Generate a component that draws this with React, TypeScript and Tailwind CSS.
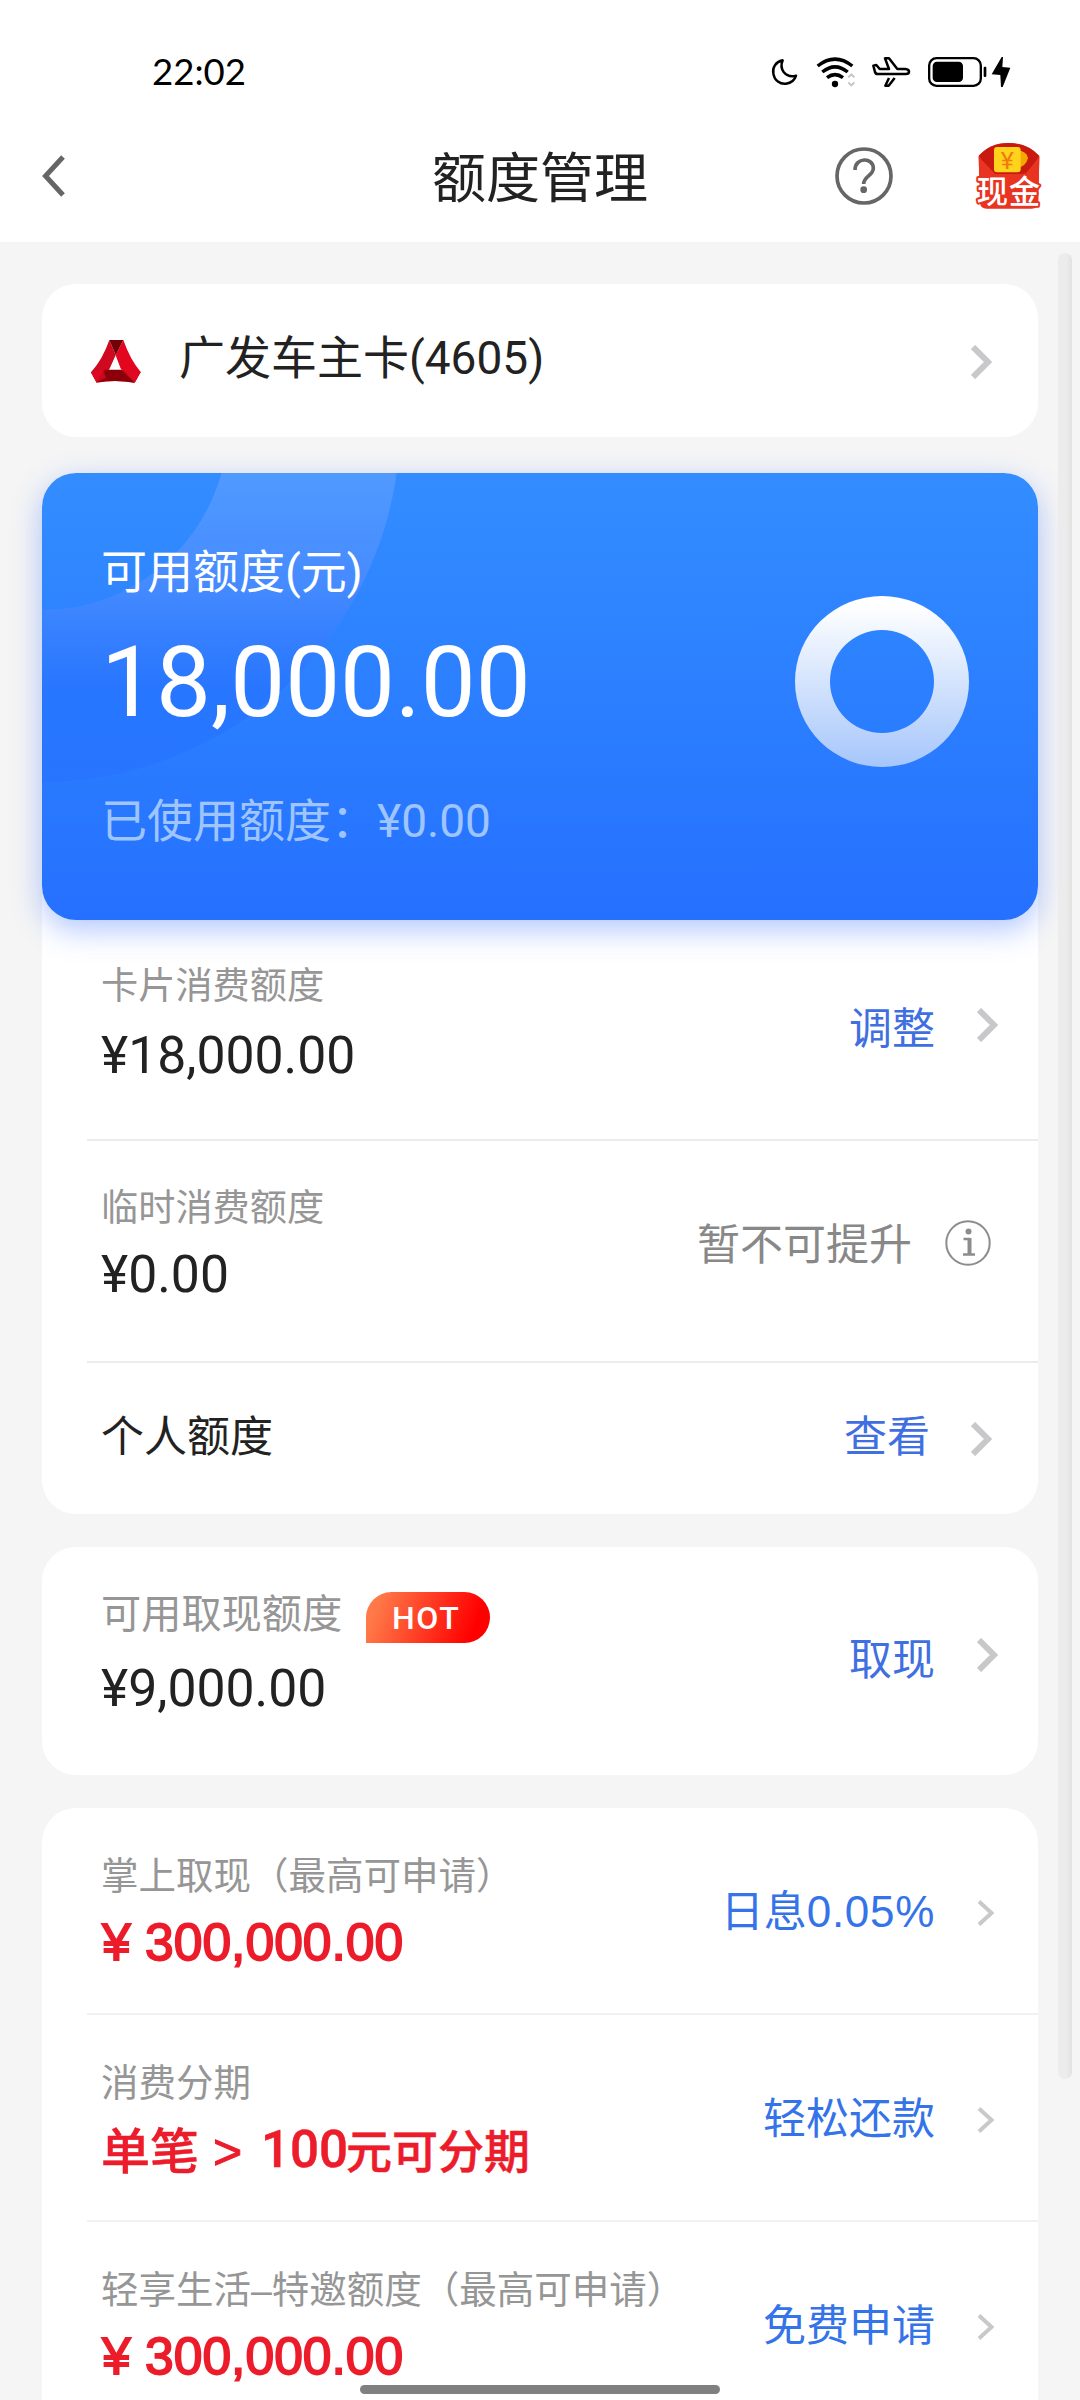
import type { ReactNode } from "react";

const SANS = "font-['Roboto','Noto_Sans_CJK_SC',sans-serif]";
const GROTESK = "font-['Liberation_Sans','Noto_Sans_CJK_SC',sans-serif]";

function StatusIcons() {
  return (
    <div className="ml-[526px] flex">
      <svg className="h-11 w-[27px]" viewBox="33 0 81 132" fill="none" stroke="#000" strokeWidth="7.500" strokeLinejoin="round">
        <path d="M68 31C46 36 37 53 40 70c3 22 21 33 38 31 16-2 26-10 30-24-14 4-28 0-37-11-9-12-8-23-3-35z" />
      </svg>
      <svg className="ml-[18px] h-11 w-[41px]" viewBox="168 0 123 132" fill="none">
        <g stroke="#000" strokeWidth="10.500">
          <path d="M173 48Q225 7 277 48" />
          <path d="M187 66Q225 35 263 66" />
          <path d="M201 83Q225 65 249 83" />
        </g>
        <circle cx="225" cy="102" r="9.5" fill="#000" />
        <path d="M265 82l9-9 9 9M265 97l9 9 9-9" stroke="#c4c4c4" strokeWidth="6" />
      </svg>
      <svg className="ml-3.5 h-11 w-10" viewBox="333 0 120 132" fill="none" stroke="#000" strokeWidth="7.500" strokeLinejoin="round">
        <path d="M340 47l9-2 10 12h28L375 25h12l25 32h24q11 1 11 8 0 7-10 7H353q-6 0-8-6z" />
        <path d="M387 84l-11 23h10l18-23" />
      </svg>
      <svg className="ml-4 h-11 w-[60px]" viewBox="501 0 180 132">
        <rect x="507.5" y="24.500" width="155" height="83" rx="22" fill="none" stroke="#000" strokeWidth="7" />
        <rect x="518" y="35" width="91" height="61" rx="13" />
        <rect x="671" y="50" width="8" height="31" rx="3" />
      </svg>
      <svg className="ml-1 h-11 w-5" viewBox="693 0 60 132">
        <path d="M725 21l-30 52 26 2 2 36h5l23-58-24-2 2-30z" />
      </svg>
    </div>
  );
}

function HelpIcon() {
  return (
    <svg className="-mt-[3px] ml-[187px] size-[58px]" viewBox="225 291 174 174" fill="none" stroke="#666" strokeWidth="11">
      <circle cx="312" cy="378" r="81" />
      <path d="M285 360C285 321 340 321 340 355c0 22-29 24-29 47" />
      <circle cx="311" cy="419" r="10" fill="#666" stroke="none" />
    </svg>
  );
}

function CashIcon() {
  return (
    <svg className="-mt-[3px] ml-[83px] h-[67px] w-[65px] overflow-visible" viewBox="648 276 195 201">
      <path d="M656 318Q690 279 746 279T838 318L835 460Q833 476 815 476H680Q662 476 660 460z" fill="#e83420" />
      <path d="M656 318Q690 279 746 279T838 318L802 372H694z" fill="#c91a10" />
      <path d="M656 320l50 52h90l42-52-2 80H658z" fill="#e83420" />
      <path d="M770 300q32 5 34 24-5 24-34 32z" fill="#f5a800" />
      <rect x="702" y="291" width="80" height="76" rx="9" fill="#ffd21c" />
      <text x="742" y="356" textAnchor="middle" fontSize="74" fill="#ee7a10" className="font-['Roboto',sans-serif]">¥</text>
      <text x="650" y="460" textLength="190" fontSize="94" fill="#fff" stroke="#e83420" strokeWidth="12" strokeLinejoin="round" paintOrder="stroke" className="font-['Noto_Sans_CJK_SC',sans-serif] font-medium">现金</text>
    </svg>
  );
}

function BankLogo() {
  return (
    <svg className="ml-[38px] h-[70px] w-20" viewBox="0 0 240 210">
      <path d="M88 42L107 88 88 130 50 170 33 139Q68 100 88 42z" fill="#cf0a20" />
      <path d="M130 42L107 88 122 128 164 170 182 138Q150 100 130 42z" fill="#e4061f" />
      <path d="M88 42h42L107 88z" fill="#720007" />
      <path d="M33 139l36-6 55-1 58 6-18 32q-57-10-114 0z" fill="#c8081c" />
      <path d="M69 131h55l40 39q-57-9-114-1l28-14z" fill="#8c0009" />
      <path d="M33 139l40-9-23 39zM182 138l-52-8 34 39z" fill="#dd0a22" />
      <path d="M106 92l16 37q-15-4-31 0z" fill="#fff" />
    </svg>
  );
}

function Chevron({ small = false, className = "" }: { small?: boolean; className?: string }) {
  return small ? (
    <svg className={`h-[26px] w-[18px] ${className}`} viewBox="0 0 18 26" fill="none" stroke="#c9c9c9" strokeWidth="4">
      <path d="M2 1.5L14.5 13 2 24.5" />
    </svg>
  ) : (
    <svg className={`h-[34px] w-[21px] ${className}`} viewBox="0 0 21 34" fill="none" stroke="#c8c8ca" strokeWidth="6">
      <path d="M2 2L17 17 2 32" />
    </svg>
  );
}

function InfoIcon({ className = "" }: { className?: string }) {
  return (
    <svg className={`h-[46px] w-[46px] ${className}`} viewBox="0 0 46 46" fill="none" stroke="#8c8c8c">
      <circle cx="23" cy="23" r="21.7" strokeWidth="2" />
      <circle cx="23.5" cy="11.5" r="3" fill="#8c8c8c" stroke="none" />
      <path d="M24.500 18v16" strokeWidth="4" />
      <path d="M18.500 19H25M18 34.500h12" strokeWidth="2.4" />
    </svg>
  );
}

function Divider({ faint = false }: { faint?: boolean }) {
  return faint ? <div className="ml-[45px] h-[2px] bg-[#f1f1f1]" /> : <div className="ml-[45px] h-[2px] bg-[#ececec]" />;
}

function Offer({ label, value, action }: { label: string; value: ReactNode; action: ReactNode }) {
  return (
    <div className={`flex h-[205px] items-start justify-between pl-[59px] pr-[43px] ${GROTESK}`}>
      <div className="whitespace-nowrap pt-12">
        <div className="text-[37.5px] leading-[40px] text-[#969696]">{label}</div>
        <div className="mt-5 text-[52px] leading-[52px] text-[#ec1c2b]">{value}</div>
      </div>
      <div className="flex pt-[82px]">
        <div className="text-[43px] leading-[44px] text-[#3473e8]">{action}</div>
        <Chevron small className="ml-[42px] mt-[10px]" />
      </div>
    </div>
  );
}

function RedAmount({ children }: { children: string }) {
  return <span className="ml-px text-[51.600px] [-webkit-text-stroke:1.800px_#ec1c2b]">{children}</span>;
}

export default function App() {
  return (
    <div className={`relative h-[2400px] w-[1080px] overflow-hidden bg-[#f5f5f5] text-[#222] ${SANS}`}>
      <header className="h-[242px] bg-white pt-[50px]">
        <div className="flex h-11 pl-[152px]">
          <div className="-mt-px w-[93px] whitespace-nowrap font-['Lato',sans-serif] text-[36.600px] leading-[44px] text-black">22:02</div>
          <StatusIcons />
        </div>
        <div className="flex h-[148px] items-center pl-[42px] pt-[18px]">
          <svg className="-mt-[2px] h-[42px] w-[23px]" viewBox="0 0 23 42" fill="none" stroke="#666" strokeWidth="5">
            <path d="M21 2L3.5 21 21 40" />
          </svg>
          <h1 className="ml-[367px] mt-[6px] w-[216px] whitespace-nowrap text-[54px] leading-[60px]">额度管理</h1>
          <HelpIcon />
          <CashIcon />
        </div>
      </header>

      <main className="px-[42px] pt-[42px]">
        <section className="flex h-[153px] items-center rounded-[34px] bg-white">
          <BankLogo />
          <div className="-mt-[5px] ml-[19px] flex-1 whitespace-nowrap text-[46px] leading-[52px]">广发车主卡(4605)</div>
          <Chevron className="mr-[46px] mt-[3px]" />
        </section>

        <div className="mt-9 rounded-[34px] bg-white">
          <section className="relative flex h-[447px] justify-between rounded-[34px] bg-linear-to-b from-[#338dff] to-[#2670ff] shadow-[0_10px_30px_rgba(38,100,255,0.36)]">
            <svg className="absolute left-0 top-0 h-[447px] w-[996px] rounded-[34px]" viewBox="0 0 996 447">
              <defs>
                <linearGradient id="arc" gradientUnits="userSpaceOnUse" x1="0" y1="0" x2="0" y2="310">
                  <stop offset="0" stopColor="#559cff" stopOpacity="0.85" />
                  <stop offset="0.35" stopColor="#4a8cff" stopOpacity="0.85" />
                  <stop offset="0.7" stopColor="#2673ff" stopOpacity="0.75" />
                  <stop offset="1" stopColor="#2673ff" stopOpacity="0.6" />
                </linearGradient>
                <linearGradient id="ring" x1="0" y1="0" x2="0" y2="1">
                  <stop offset="0.05" stopColor="#fff" />
                  <stop offset="1" stopColor="#a6c6fb" />
                </linearGradient>
              </defs>
              <circle cx="0" cy="-49" r="272" fill="none" stroke="url(#arc)" strokeWidth="172" />
              <path fillRule="evenodd" fill="url(#ring)" d="M753 208.500a87 85.500 0 1 0 174 0a87 85.500 0 1 0-174 0zM788 208.500a52 51.500 0 1 1 104 0a52 51.500 0 1 1-104 0z" />
            </svg>
            <div className="relative whitespace-nowrap pl-[59px] pt-[73px] text-white">
              <div className="text-[46px] leading-[52px]">可用额度(元)</div>
              <div className="mt-[35px] text-[97.800px] leading-[100px]">18,000.00</div>
              <div className="mt-[62px] text-[46px] leading-[52px] text-[#9fc5ff]">已使用额度：¥0.00</div>
            </div>
          </section>

          <div className="flex h-[219px] items-start justify-between pl-[59px] pr-10">
            <div className="pt-[46px]">
              <div className="text-[37.200px] leading-[40px] text-[#969696]">卡片消费额度</div>
              <div className="mt-6 text-[51.700px] leading-[52px]">¥18,000.00</div>
            </div>
            <div className="flex pt-[88px]">
              <div className="-mt-px text-[43px] leading-[44px] text-[#3f6fe0]">调整</div>
              <Chevron className="ml-[42px]" />
            </div>
          </div>
          <Divider />
          <div className="flex h-[220px] items-start justify-between pl-[59px] pr-[47px]">
            <div className="pt-[47px]">
              <div className="text-[37.200px] leading-[40px] text-[#969696]">临时消费额度</div>
              <div className="mt-[21px] text-[51.700px] leading-[52px]">¥0.00</div>
            </div>
            <div className="flex pt-[79px]">
              <div className="mt-[3px] text-[43px] leading-[44px] text-[#888]">暂不可提升</div>
              <InfoIcon className="ml-[33px]" />
            </div>
          </div>
          <Divider />
          <div className="flex h-[151px] items-center justify-between pl-[59px] pr-[46px]">
            <div className="-mt-[4px] text-[43px] leading-[44px]">个人额度</div>
            <div className="flex items-center">
              <div className="-mt-[4px] text-[43px] leading-[44px] text-[#3f6fe0]">查看</div>
              <Chevron className="ml-[41px]" />
            </div>
          </div>
        </div>

        <section className="mt-[33px] flex h-[228px] items-start justify-between rounded-[34px] bg-white pl-[59px] pr-10">
          <div className="pt-[45px]">
            <div className="flex h-[51px]">
              <div className="mt-[3px] w-[240px] whitespace-nowrap text-[40.200px] leading-[40px] text-[#969696]">可用取现额度</div>
              <div className="ml-[25px] w-[124px] rounded-[26px] rounded-bl-none bg-linear-[110deg] from-[#ff7a48] from-10% to-[#ff0000] to-85% pl-[26px] text-[32px] font-medium leading-[52px] tracking-[1.600px] text-white">HOT</div>
            </div>
            <div className="mt-5 text-[51.700px] leading-[52px]">¥9,000.00</div>
          </div>
          <div className="flex pt-[91px]">
            <div className="text-[43px] leading-[44px] text-[#3f6fe0]">取现</div>
            <Chevron className="ml-[42px]" />
          </div>
        </section>

        <section className="mt-[33px] rounded-t-[34px] bg-white">
          <Offer
            label="掌上取现（最高可申请）"
            value={<RedAmount>¥ 300,000.00</RedAmount>}
            action={
              <>
                日息<span className="text-[44px] tracking-[0.700px]">0.05%</span>
              </>
            }
          />
          <Divider faint />
          <Offer
            label="消费分期"
            value={
              <span className="flex pt-[3px] font-medium [-webkit-text-stroke:0.500px_#ec1c2b]">
                <span className="text-[49px]">单笔</span>
                <span className="ml-[14px] w-[48px] text-[50px] font-normal [-webkit-text-stroke:1px_#ec1c2b]">&gt;</span>
                <span className="-mt-[2px] w-[85px] font-['Roboto',sans-serif] text-[51px]">100</span>
                <span className="text-[46px]">元可分期</span>
              </span>
            }
            action="轻松还款"
          />
          <Divider faint />
          <Offer label="轻享生活–特邀额度（最高可申请）" value={<RedAmount>¥ 300,000.00</RedAmount>} action="免费申请" />
        </section>
      </main>

      <div className="absolute right-2 top-[253px] h-[1826px] w-[14px] rounded-[7px] bg-linear-to-r from-[#ececec] from-60% to-[#e2e2e2]" />
      <div className="absolute left-[360px] top-[2385px] h-[9px] w-[360px] rounded-full bg-[#808080]" />
    </div>
  );
}
